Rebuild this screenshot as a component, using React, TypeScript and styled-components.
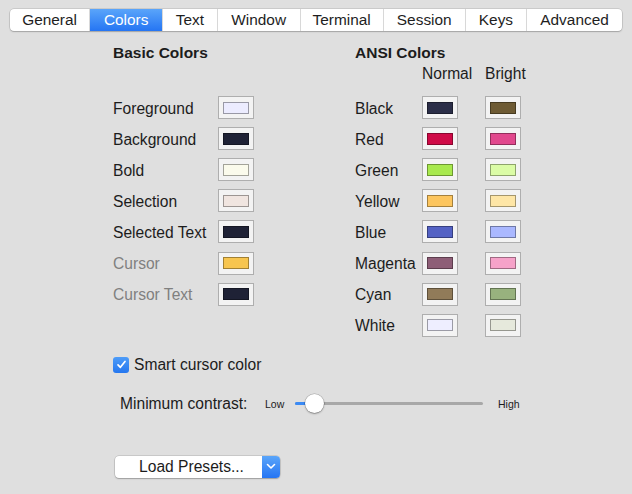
import React, { ReactElement } from "react";
import styled, { createGlobalStyle } from "styled-components";

const GlobalStyle = createGlobalStyle`
  body {
    margin: 0;
    background: #dfdfdf;
    font-family: "Liberation Sans", Arial, sans-serif;
    color: #1c1c1c;
  }
`;

const Page = styled.div`
  width: 632px;
  height: 494px;
  overflow: hidden;
  display: flex;
  flex-direction: column;
`;

const TabBar = styled.div`
  margin: 9px 0 0 10px;
  width: 612px;
  height: 22px;
  display: flex;
  background: #fff;
  border-radius: 4px;
  box-shadow: 0 0 0 0.5px rgba(0, 0, 0, 0.18), 0 1px 1.5px rgba(0, 0, 0, 0.2);
  overflow: hidden;
`;

const Tab = styled.div<{ $w: number; $active?: boolean }>`
  width: ${(p) => p.$w}px;
  display: flex;
  align-items: center;
  justify-content: center;
  font-size: 15.4px;
  color: ${(p) => (p.$active ? "#fff" : "#1e1e1e")};
  background: ${(p) =>
    p.$active ? "linear-gradient(#5aa5fa, #2575f3)" : "transparent"};
  & + & {
    border-left: 1px solid #d8d8d8;
  }
`;

const Columns = styled.div`
  display: flex;
  padding-left: 113px;
  margin-top: 12px;
`;

const Column = styled.div<{ $w?: number }>`
  width: ${(p) => (p.$w ? `${p.$w}px` : "auto")};
  display: flex;
  flex-direction: column;
`;

const Heading = styled.div`
  font-size: 15.5px;
  font-weight: bold;
  height: 18px;
  line-height: 18px;
  margin-top: 1px;
`;

const SubHeader = styled.div`
  margin-top: 3px;
  height: 18px;
  display: grid;
  grid-template-columns: 67px 63px 37px;
  font-size: 15.6px;
  line-height: 18px;
`;

const SubLabel = styled.span`
  white-space: nowrap;
`;

const Rows = styled.div<{ $top: number }>`
  margin-top: ${(p) => p.$top}px;
  padding-top: 1px;
`;

const Row = styled.div<{ $cols: string }>`
  height: 31.1px;
  display: grid;
  grid-template-columns: ${(p) => p.$cols};
  align-items: center;
`;

const Label = styled.span<{ $dim?: boolean }>`
  font-size: 15.6px;
  white-space: nowrap;
  position: relative;
  top: 1px;
  color: ${(p) => (p.$dim ? "#808080" : "#1c1c1c")};
`;

const Well = styled.div`
  width: 36px;
  height: 23px;
  box-sizing: border-box;
  border: 1px solid #aeaeae;
  background: #f3f3f3;
  display: flex;
  align-items: center;
  justify-content: center;
`;

const Swatch = styled.div<{ $c: string }>`
  width: 26px;
  height: 12px;
  box-sizing: border-box;
  background: ${(p) => p.$c};
  border: 1px solid rgba(0, 0, 0, 0.35);
`;

const CheckRow = styled.label`
  margin: 14px 0 0 113px;
  height: 20px;
  display: flex;
  align-items: center;
  gap: 5px;
  font-size: 15.6px;
`;

const CheckBox = styled.span`
  width: 16px;
  height: 16px;
  border-radius: 3px;
  background: linear-gradient(#4d9cf8, #2577ef);
  display: flex;
  align-items: center;
  justify-content: center;
`;

const ContrastRow = styled.div`
  margin: 19px 0 0 120px;
  height: 20px;
  display: flex;
  align-items: center;
  font-size: 15.6px;
`;

const ContrastLabel = styled.span`
  width: 145px;
  white-space: nowrap;
`;

const SmallText = styled.span<{ $ml?: number }>`
  font-size: 10.5px;
  width: 21px;
  margin-left: ${(p) => p.$ml ?? 0}px;
`;

const Track = styled.div`
  margin-left: 9px;
  width: 188px;
  height: 3px;
  border-radius: 2px;
  background: #a8a8a8;
  position: relative;
`;

const TrackFill = styled.div`
  width: 14px;
  height: 3px;
  border-radius: 2px;
  background: #3a8af5;
`;

const Knob = styled.div`
  position: absolute;
  left: 10px;
  top: -8px;
  width: 19px;
  height: 19px;
  border-radius: 50%;
  background: #fff;
  box-shadow: 0 0 0 0.5px rgba(0, 0, 0, 0.25), 0 1px 2px rgba(0, 0, 0, 0.3);
`;

const PresetButton = styled.div`
  margin: 42px 0 0 115px;
  width: 165px;
  height: 22px;
  display: flex;
  background: #fff;
  border-radius: 4px;
  box-shadow: 0 0 0 0.5px rgba(0, 0, 0, 0.2), 0 1px 1.5px rgba(0, 0, 0, 0.22);
  overflow: hidden;
`;

const PresetText = styled.span`
  flex: 1;
  display: flex;
  align-items: center;
  justify-content: center;
  font-size: 15.6px;
  padding-left: 6px;
`;

const PresetArrow = styled.span`
  width: 18px;
  background: linear-gradient(#5aa5fa, #2575f3);
  display: flex;
  align-items: center;
  justify-content: center;
`;

const tabs = [
  { name: "General", w: 80 },
  { name: "Colors", w: 73, active: true },
  { name: "Text", w: 54 },
  { name: "Window", w: 83 },
  { name: "Terminal", w: 83 },
  { name: "Session", w: 82 },
  { name: "Keys", w: 61 },
  { name: "Advanced", w: 96 },
];

const basic = [
  { name: "Foreground", c: "#ececff" },
  { name: "Background", c: "#1f2236" },
  { name: "Bold", c: "#fbfbec" },
  { name: "Selection", c: "#f0e5e0" },
  { name: "Selected Text", c: "#1f2236" },
  { name: "Cursor", c: "#f7c54f", dim: true },
  { name: "Cursor Text", c: "#1f2236", dim: true },
];

const ansi = [
  { name: "Black", n: "#2b2e48", b: "#6e5b34" },
  { name: "Red", n: "#cf0a47", b: "#e1488d" },
  { name: "Green", n: "#a8e94e", b: "#dbfca6" },
  { name: "Yellow", n: "#fcc55e", b: "#fee6a6" },
  { name: "Blue", n: "#5462c4", b: "#aab8ff" },
  { name: "Magenta", n: "#8e5e77", b: "#f6a2c9" },
  { name: "Cyan", n: "#917b59", b: "#98b27e" },
  { name: "White", n: "#eeeeff", b: "#e6e9dc" },
];

export default function App(): ReactElement {
  return (
    <Page>
      <GlobalStyle />
      <TabBar>
        {tabs.map((t) => (
          <Tab key={t.name} $w={t.w} $active={t.active}>
            {t.name}
          </Tab>
        ))}
      </TabBar>

      <Columns>
        <Column $w={242}>
          <Heading>Basic Colors</Heading>
          <Rows $top={29}>
            {basic.map((r) => (
              <Row key={r.name} $cols="105px 36px">
                <Label $dim={r.dim}>{r.name}</Label>
                <Well>
                  <Swatch $c={r.c} />
                </Well>
              </Row>
            ))}
          </Rows>
        </Column>
        <Column>
          <Heading>ANSI Colors</Heading>
          <SubHeader>
            <span />
            <SubLabel>Normal</SubLabel>
            <SubLabel>Bright</SubLabel>
          </SubHeader>
          <Rows $top={8}>
            {ansi.map((r) => (
              <Row key={r.name} $cols="67px 63px 37px">
                <Label>{r.name}</Label>
                <Well>
                  <Swatch $c={r.n} />
                </Well>
                <Well>
                  <Swatch $c={r.b} />
                </Well>
              </Row>
            ))}
          </Rows>
        </Column>
      </Columns>

      <CheckRow>
        <CheckBox>
          <svg width="11" height="11" viewBox="0 0 11 11">
            <path
              d="M2 5.8 L4.4 8.3 L9 2.4"
              fill="none"
              stroke="#fff"
              strokeWidth="1.7"
              strokeLinecap="round"
              strokeLinejoin="round"
            />
          </svg>
        </CheckBox>
        Smart cursor color
      </CheckRow>

      <ContrastRow>
        <ContrastLabel>Minimum contrast:</ContrastLabel>
        <SmallText>Low</SmallText>
        <Track>
          <TrackFill />
          <Knob />
        </Track>
        <SmallText $ml={15}>High</SmallText>
      </ContrastRow>

      <PresetButton>
        <PresetText>Load Presets...</PresetText>
        <PresetArrow>
          <svg width="10" height="7" viewBox="0 0 10 7">
            <path
              d="M1.5 1.5 L5 5 L8.5 1.5"
              fill="none"
              stroke="#fff"
              strokeWidth="1.6"
              strokeLinecap="round"
              strokeLinejoin="round"
            />
          </svg>
        </PresetArrow>
      </PresetButton>
    </Page>
  );
}
